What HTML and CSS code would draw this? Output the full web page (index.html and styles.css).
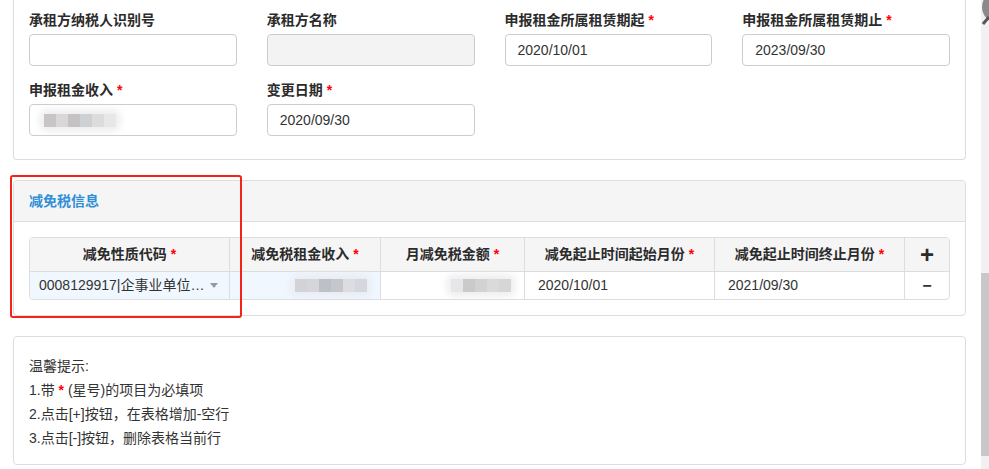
FILE: index.html
```html
<!DOCTYPE html>
<html lang="zh-CN">
<head>
<meta charset="utf-8">
<title>减免税信息</title>
<link rel="stylesheet" href="styles.css">
</head>
<body>
<div class="page">
  <div class="panel panel-top">
    <div class="panel-body">
      <div class="form-grid">
        <div class="form-group">
          <label class="lbl">承租方纳税人识别号</label>
          <div class="input"></div>
        </div>
        <div class="form-group">
          <label class="lbl">承租方名称</label>
          <div class="input disabled"></div>
        </div>
        <div class="form-group">
          <label class="lbl">申报租金所属租赁期起 <span class="req">*</span></label>
          <div class="input">2020/10/01</div>
        </div>
        <div class="form-group">
          <label class="lbl">申报租金所属租赁期止 <span class="req">*</span></label>
          <div class="input">2023/09/30</div>
        </div>
        <div class="form-group">
          <label class="lbl">申报租金收入 <span class="req">*</span></label>
          <div class="input">
            <span class="blur blur-a"><i></i><i></i><i></i><i></i><i></i><i></i></span>
          </div>
        </div>
        <div class="form-group">
          <label class="lbl">变更日期 <span class="req">*</span></label>
          <div class="input">2020/09/30</div>
        </div>
      </div>
    </div>
  </div>

  <div class="panel">
    <div class="panel-heading">减免税信息</div>
    <div class="panel-body table-body">
      <div class="grid-table">
        <div class="th">减免性质代码 <span class="req">*</span></div>
        <div class="th">减免税租金收入 <span class="req">*</span></div>
        <div class="th">月减免税金额 <span class="req">*</span></div>
        <div class="th">减免起止时间起始月份 <span class="req">*</span></div>
        <div class="th">减免起止时间终止月份 <span class="req">*</span></div>
        <div class="th op">+</div>
        <div class="td sel active"><span class="sel-text">0008129917|企事业单位…</span><span class="caret"></span></div>
        <div class="td active num"><span class="blur blur-b"><i></i><i></i><i></i><i></i><i></i><i></i></span></div>
        <div class="td num"><span class="blur blur-c"><i></i><i></i><i></i><i></i><i></i></span></div>
        <div class="td date">2020/10/01</div>
        <div class="td date">2021/09/30</div>
        <div class="td op">−</div>
      </div>
    </div>
  </div>

  <div class="panel">
    <div class="panel-body tips">
      <p>温馨提示:</p>
      <p>1.带 <span class="req">*</span> (星号)的项目为必填项</p>
      <p>2.点击[+]按钮，在表格增加-空行</p>
      <p>3.点击[-]按钮，删除表格当前行</p>
    </div>
  </div>
</div>

<div class="highlight"></div>
<div class="scrollbar"><div class="thumb"></div></div>
<svg class="corner-icon" width="8" height="28" viewBox="0 0 8 28">
  <circle cx="17" cy="7" r="16" fill="#8a8a8a"/>
  <path d="M2 24 L8 17" stroke="#555" stroke-width="3"/>
</svg>
</body>
</html>
```

FILE: styles.css
```css
html, body {
  margin: 0;
  padding: 0;
  background: #fff;
  overflow: hidden;
}
body {
  font-family: "Liberation Sans", "Noto Sans CJK SC", sans-serif;
  font-size: 14px;
  color: #333;
  width: 989px;
  height: 469px;
  position: relative;
}
.page {
  width: 953px;
  margin-left: 13px;
}
.panel {
  border: 1px solid #ddd;
  border-radius: 4px;
  background: #fff;
  margin-bottom: 20px;
}
.panel-top {
  border-top: 0;
  border-radius: 0 0 4px 4px;
}
.panel-body {
  padding: 15px;
}
.panel-top .panel-body {
  padding: 10px 15px 9px;
}
.form-grid {
  display: grid;
  grid-template-columns: repeat(4, 1fr);
  column-gap: 30px;
}
.form-group {
  margin-bottom: 14px;
}
.lbl {
  display: block;
  font-weight: bold;
  line-height: 20px;
  margin-bottom: 4px;
  color: #2b2b2b;
}
.req {
  color: #f00;
  font-weight: bold;
}
.input {
  height: 30px;
  border: 1px solid #ccc;
  border-radius: 4px;
  padding: 0 12px;
  line-height: 30px;
  display: flex;
  align-items: center;
  color: #333;
}
.input.disabled {
  background: #f3f3f3;
}
.blur {
  display: inline-flex;
  box-shadow: 0 0 6px 5px rgba(232, 232, 238, 0.7);
  border-radius: 4px;
}
.blur i {
  display: block;
  width: 12px;
  height: 13px;
}
.blur-a { margin-left: 2px; }
.blur-a i:nth-child(1) { background: #c9c5c5; }
.blur-a i:nth-child(2) { background: #d9d7d7; }
.blur-a i:nth-child(3) { background: #c6c2c2; }
.blur-a i:nth-child(4) { background: #ced1d4; }
.blur-a i:nth-child(5) { background: #dddcdc; }
.blur-a i:nth-child(6) { background: #e7e7e7; }
.blur-b i:nth-child(1) { background: #d1d3d7; }
.blur-b i:nth-child(2) { background: #d4d6db; }
.blur-b i:nth-child(3) { background: #bdc1c7; }
.blur-b i:nth-child(4) { background: #c5c8cb; }
.blur-b i:nth-child(5) { background: #dbdddf; }
.blur-b i:nth-child(6) { background: #d4d7dd; }
.blur-c i:nth-child(1) { background: #e6e6e6; }
.blur-c i:nth-child(2) { background: #cacaca; }
.blur-c i:nth-child(3) { background: #d2d2d2; }
.blur-c i:nth-child(4) { background: #dadada; }
.blur-c i:nth-child(5) { background: #d6d6d6; }

.panel-heading {
  background: #f5f5f5;
  border-bottom: 1px solid #ddd;
  border-radius: 4px 4px 0 0;
  padding: 10px 15px;
  line-height: 20px;
  font-weight: bold;
  color: #2f8fd8;
}
.grid-table {
  display: grid;
  grid-template-columns: 200px 151px 144px 190px 190px 1fr;
  border: 1px solid #ddd;
  border-radius: 4px;
  overflow: hidden;
}
.th {
  background: #f5f5f5;
  height: 33px;
  line-height: 33px;
  text-align: center;
  font-weight: bold;
  color: #2b2b2b;
  border-right: 1px solid #ddd;
  border-bottom: 1px solid #ddd;
  white-space: nowrap;
}
.td {
  height: 27px;
  line-height: 27px;
  border-right: 1px solid #ddd;
  white-space: nowrap;
  display: flex;
  align-items: center;
}
.th:nth-child(6), .td:nth-child(12) {
  border-right: 0;
}
.th.op {
  font-size: 24px;
  font-weight: bold;
}
.td.op {
  justify-content: center;
  font-weight: bold;
  font-size: 16px;
}
.td.active {
  background: #f0f7ff;
}
.td.sel {
  padding: 0 9px 0 9px;
  justify-content: space-between;
}
.caret {
  width: 0;
  height: 0;
  border-left: 4px solid transparent;
  border-right: 4px solid transparent;
  border-top: 5px solid #999;
  margin-right: 2px;
}
.td.num {
  justify-content: flex-end;
  padding-right: 13px;
}
.td.date {
  padding-left: 13px;
}
.tips {
  padding: 17px 15px 14px;
}
.tips p {
  margin: 0;
  line-height: 24px;
}
.highlight {
  position: absolute;
  left: 10px;
  top: 175px;
  width: 228px;
  height: 139px;
  border: 2px solid #f22418;
  border-radius: 3px;
  pointer-events: none;
}
.scrollbar {
  position: absolute;
  right: 0;
  top: 0;
  width: 8px;
  height: 469px;
  background: #f1f1f1;
}
.thumb {
  margin-top: 273px;
  height: 183px;
  background: #c8c8c8;
}
.corner-icon {
  position: absolute;
  right: 0;
  top: 0;
}
```
